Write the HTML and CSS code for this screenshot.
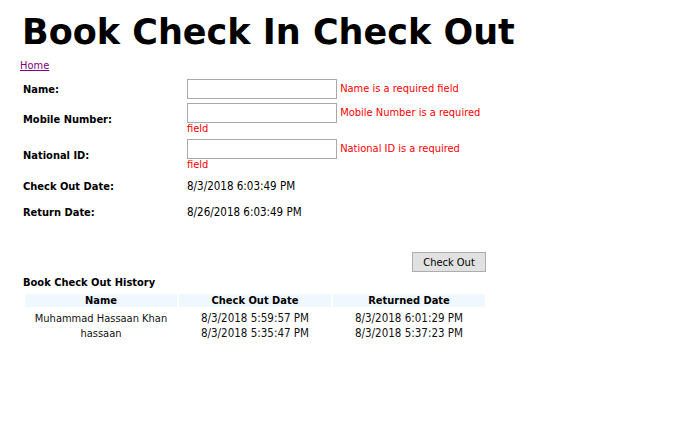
FILE: index.html
```html
<!DOCTYPE html>
<html>
<head>
<meta charset="utf-8">
<title>Book Check In Check Out</title>
<link rel="stylesheet" href="styles.css">
</head>
<body>
<div class="page">
  <h1 class="title">Book Check In Check Out</h1>
  <a class="home" href="#">Home</a>
  <table class="form">
    <tr class="r-name">
      <td class="lbl">Name:</td>
      <td class="fld"><input class="txt" type="text"> <span class="err">Name is a required field</span></td>
    </tr>
    <tr class="r-mob">
      <td class="lbl">Mobile Number:</td>
      <td class="fld"><input class="txt" type="text"> <span class="err">Mobile Number is a required field</span></td>
    </tr>
    <tr class="r-nid">
      <td class="lbl">National ID:</td>
      <td class="fld"><input class="txt" type="text"> <span class="err">National ID is a required field</span></td>
    </tr>
    <tr class="r-date">
      <td class="lbl">Check Out Date:</td>
      <td class="val">8/3/2018 6:03:49 PM</td>
    </tr>
    <tr class="r-date">
      <td class="lbl">Return Date:</td>
      <td class="val">8/26/2018 6:03:49 PM</td>
    </tr>
    <tr class="r-gap"><td></td><td></td></tr>
    <tr class="r-btn">
      <td></td>
      <td class="btncell"><button class="btn" type="button">Check Out</button></td>
    </tr>
  </table>
  <div class="hist-title">Book Check Out History</div>
  <table class="hist">
    <thead>
      <tr><th>Name</th><th>Check Out Date</th><th>Returned Date</th></tr>
    </thead>
    <tbody>
      <tr><td>Muhammad Hassaan Khan</td><td class="num">8/3/2018 5:59:57 PM</td><td class="num">8/3/2018 6:01:29 PM</td></tr>
      <tr><td>hassaan</td><td class="num">8/3/2018 5:35:47 PM</td><td class="num">8/3/2018 5:37:23 PM</td></tr>
    </tbody>
  </table>
</div>
</body>
</html>
```
FILE: styles.css
```css
html, body {
  margin: 0;
  padding: 0;
  background: #fff;
}
body {
  font-family: "DejaVu Sans Condensed", "DejaVu Sans", sans-serif;
  font-size: 11px;
  color: #000;
}
.page {
  padding: 0 20px;
}
.title {
  font-family: "DejaVu Sans", sans-serif;
  font-weight: bold;
  font-size: 35px;
  line-height: 44px;
  margin: 10px 0 5px 2px;
}
.home {
  display: block;
  color: #800080;
  text-decoration: underline;
  line-height: 13px;
  margin-bottom: 5px;
}
.form {
  border-collapse: collapse;
  width: 466px;
}
.form td {
  padding: 0;
  vertical-align: middle;
}
.lbl {
  width: 164px;
  padding-left: 3px !important;
  font-weight: bold;
}
.fld {
  line-height: 12px;
  padding: 2px 4px 2px 0 !important;
}
.txt {
  box-sizing: border-box;
  width: 150px;
  height: 20px;
  border: 1px solid #a9a9a9;
  margin: 0;
  padding: 1px 2px;
  vertical-align: middle;
  font: inherit;
}
.err {
  color: #ff0000;
}
.val {
  font-size: 11.5px;
}
.r-date td {
  height: 26px;
}
.r-gap td {
  height: 23px;
}
.btncell {
  text-align: right;
  padding: 4px 0 4px 0 !important;
}
.btn {
  width: 74px;
  height: 20px;
  background: #e1e1e1;
  border: 1px solid #adadad;
  font: inherit;
  color: #000;
  padding: 0;
  margin: 0;
}
.hist-title {
  font-weight: bold;
  padding-left: 3px;
  line-height: 13px;
  margin-top: 0;
}
.hist {
  margin-left: 3px;
  width: 464px;
  border-collapse: separate;
  border-spacing: 2px;
  table-layout: fixed;
  margin-top: 3px;
}
.hist th {
  background: #f0f8ff;
  font-weight: bold;
  height: 13px;
  padding: 0;
  line-height: 13px;
  text-align: center;
}
.hist td {
  text-align: center;
  padding: 0;
  line-height: 13px;
  color: #111;
}
.hist td.num {
  font-size: 11.5px;
}
.hist tbody tr:first-child td {
  padding-top: 3px;
}
```
